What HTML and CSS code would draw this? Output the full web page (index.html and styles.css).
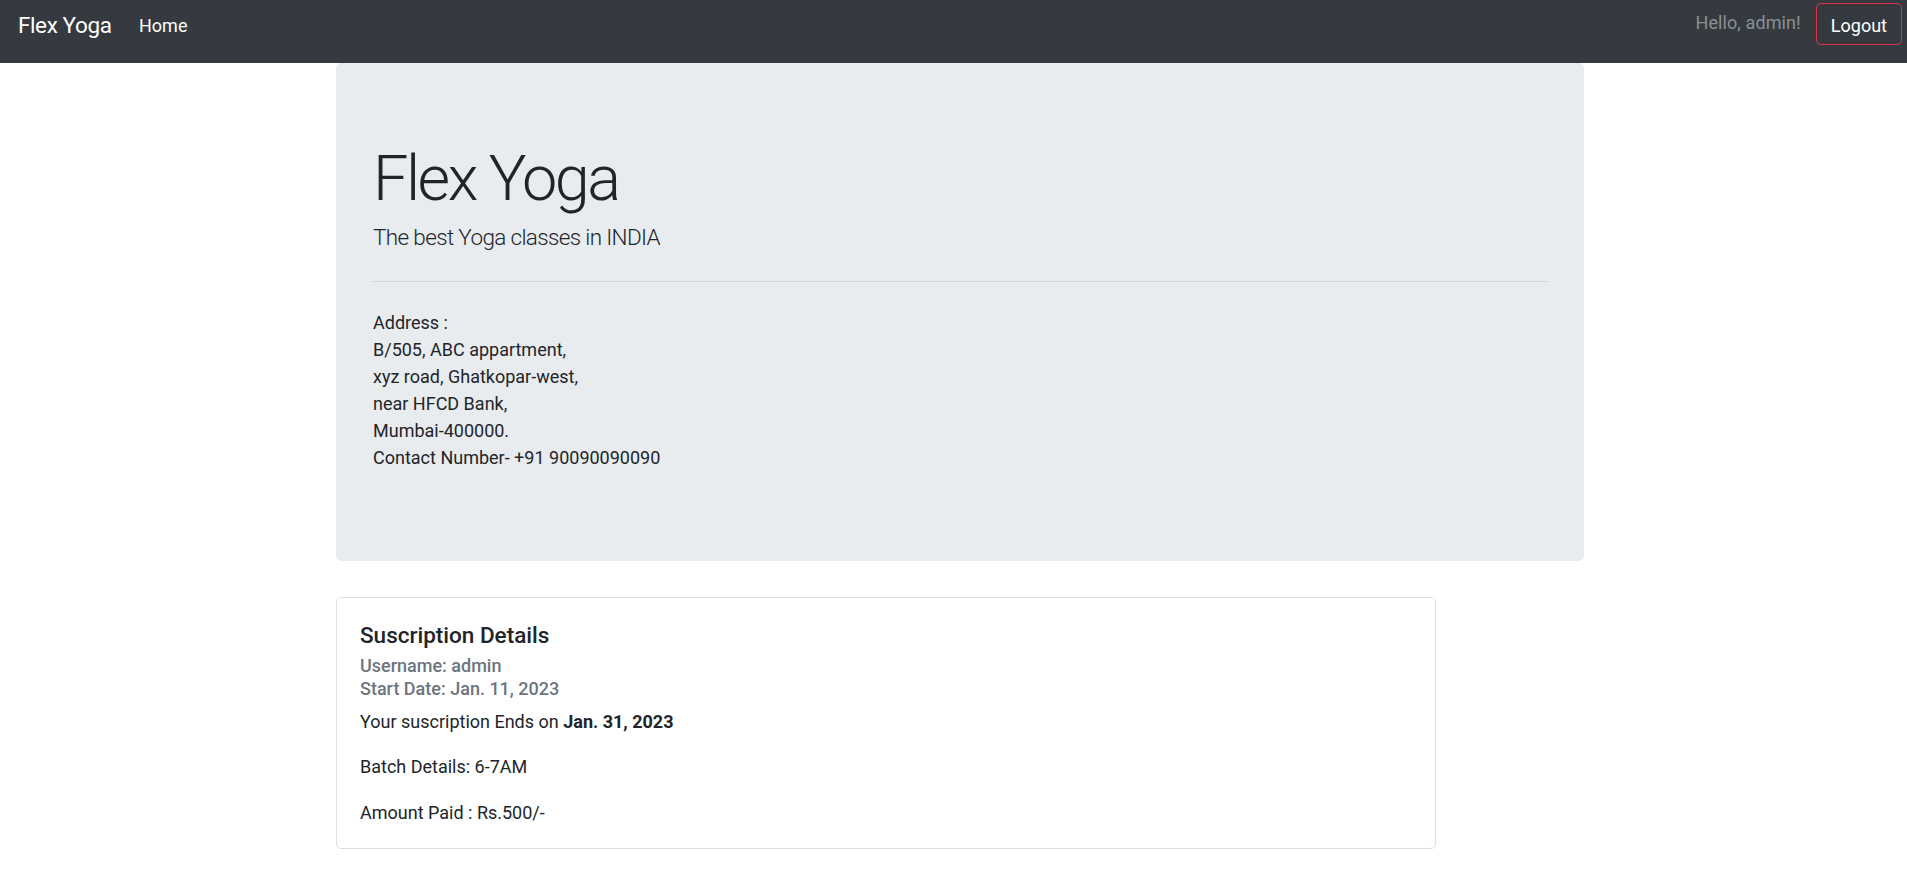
FILE: index.html
```html
<!DOCTYPE html>
<html lang="en">
<head>
<meta charset="utf-8">
<title>Flex Yoga</title>
<link rel="stylesheet" href="styles.css">
</head>
<body>
<nav class="navbar">
  <a class="brand" href="#">Flex Yoga</a>
  <a class="nav-link" href="#">Home</a>
  <div class="nav-right">
    <span class="hello">Hello, admin!</span>
    <a class="btn-logout" href="#">Logout</a>
  </div>
</nav>
<main class="main">
  <section class="jumbotron">
    <h1 class="display">Flex Yoga</h1>
    <p class="lead">The best Yoga classes in INDIA</p>
    <hr class="divider">
    <p class="address">Address :<br>B/505, ABC appartment,<br>xyz road, Ghatkopar-west,<br>near HFCD Bank,<br>Mumbai-400000.<br>Contact Number- +91 90090090090</p>
  </section>
  <section class="card">
    <h5 class="card-title">Suscription Details</h5>
    <h6 class="card-subtitle">Username: admin<br>Start Date: Jan. 11, 2023</h6>
    <p class="card-text first">Your suscription Ends on <b>Jan. 31, 2023</b></p>
    <p class="card-text">Batch Details: 6-7AM</p>
    <p class="card-text last">Amount Paid : Rs.500/-</p>
  </section>
</main>
</body>
</html>
```
FILE: styles.css
```css
* { box-sizing: border-box; }
html, body { margin: 0; padding: 0; }
body {
  font-family: Roboto, "Noto Sans", sans-serif;
  font-size: 18px;
  line-height: 27px;
  color: #212529;
  background: #fff;
}
a { text-decoration: none; }

.navbar {
  display: flex;
  align-items: flex-start;
  height: 63px;
  background: #343a40;
  padding-left: 18px;
  padding-right: 5px;
}
.brand {
  color: #fff;
  font-size: 22.5px;
  line-height: 34px;
  margin-top: 8px;
  min-width: 121px;
  letter-spacing: -0.4px;
}
.nav-link {
  color: #fff;
  font-size: 18px;
  line-height: 27px;
  margin-top: 12px;
}
.nav-right {
  margin-left: auto;
  display: flex;
  align-items: flex-start;
}
.hello {
  color: #8c8f93;
  line-height: 27px;
  margin-top: 9px;
  margin-right: 15px;
  letter-spacing: 0.1px;
}
.btn-logout {
  display: block;
  margin-top: 3px;
  height: 42px;
  color: #fff;
  border: 1px solid #dc3545;
  border-radius: 5px;
  padding: 8px 14px 5px;
  line-height: 27px;
}

.main {
  padding-left: 336px;
}
.jumbotron {
  width: 1248px;
  background: #e9ecef;
  border-radius: 5px;
  padding: 78px 36px 90px 37px;
}
.display {
  margin: 0;
  font-size: 63px;
  font-weight: 300;
  line-height: 76px;
  letter-spacing: -2.5px;
}
.lead {
  margin: 3px 0 0;
  font-size: 22.5px;
  font-weight: 300;
  line-height: 34px;
  letter-spacing: -0.65px;
}
.divider {
  margin: 27px 0 0;
  border: 0;
  border-top: 1px solid rgba(0, 0, 0, 0.1);
  height: 0;
}
.address {
  margin: 27px 0 0;
}

.card {
  margin-top: 36px;
  width: 1100px;
  border: 1px solid rgba(0, 0, 0, 0.125);
  border-radius: 5px;
  padding: 24px 23px 22px;
}
.card-title {
  margin: 0;
  font-size: 22.5px;
  font-weight: 500;
  line-height: 27px;
}
.card-subtitle {
  margin: 5px 0 0;
  font-size: 18px;
  font-weight: 500;
  line-height: 23px;
  color: #6c757d;
}
.card-text {
  margin: 18px 0 0;
}
.card-text.first { margin-top: 8px; }
.card-text.last { margin-top: 19px; }
.card-text b { font-weight: 700; }
```
